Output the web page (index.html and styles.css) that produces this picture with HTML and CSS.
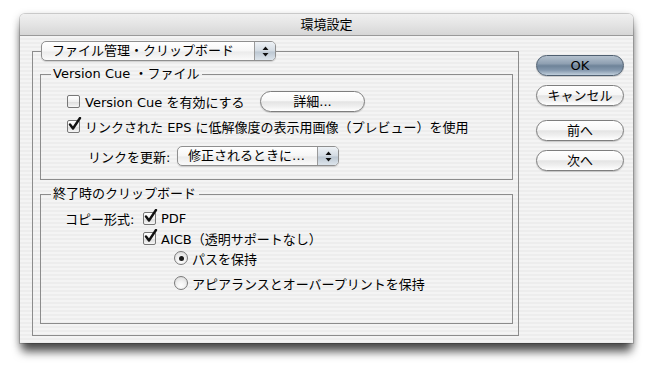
FILE: index.html
```html
<!DOCTYPE html>
<html lang="ja">
<head>
<meta charset="utf-8">
<title>環境設定</title>
<link rel="stylesheet" href="styles.css">
</head>
<body>
<div class="window">
  <div class="titlebar">環境設定</div>
  <div class="content">
    <fieldset class="panel">
      <legend class="panel-legend">
        <div class="popup popup-main">
          <span class="popup-label">ファイル管理・クリップボード</span>
          <span class="popup-arrows"><svg width="7" height="11" viewBox="0 0 7 11"><path d="M3.5 0.5 L6.5 4 L0.5 4 Z M3.5 10.5 L6.5 7 L0.5 7 Z" fill="#111"/></svg></span>
        </div>
      </legend>
      <fieldset class="group group-vc">
        <legend class="group-legend">Version Cue ・ファイル</legend>
        <div class="row row-enable">
          <span class="check"></span>
          <span class="enable-label">Version Cue を有効にする</span>
          <button class="btn btn-detail">詳細...</button>
        </div>
        <div class="row row-eps">
          <span class="check"><svg class="tick" width="16" height="16" viewBox="0 0 16 16"><path d="M3 7.5 L6 11.5 L13 1" fill="none" stroke="#111" stroke-width="2.4" stroke-linecap="round" stroke-linejoin="round"/></svg></span>
          <span>リンクされた EPS に低解像度の表示用画像（プレビュー）を使用</span>
        </div>
        <div class="row row-update">
          <span class="update-label">リンクを更新:</span>
          <div class="popup popup-update">
            <span class="popup-label">修正されるときに…</span>
            <span class="popup-arrows"><svg width="7" height="11" viewBox="0 0 7 11"><path d="M3.5 0.5 L6.5 4 L0.5 4 Z M3.5 10.5 L6.5 7 L0.5 7 Z" fill="#111"/></svg></span>
          </div>
        </div>
      </fieldset>
      <fieldset class="group group-clip">
        <legend class="group-legend">終了時のクリップボード</legend>
        <div class="crow crow-pdf">
          <span class="copy-label">コピー形式:</span>
          <span class="check"><svg class="tick" width="16" height="16" viewBox="0 0 16 16"><path d="M3 7.5 L6 11.5 L13 1" fill="none" stroke="#111" stroke-width="2.4" stroke-linecap="round" stroke-linejoin="round"/></svg></span>
          <span>PDF</span>
        </div>
        <div class="crow crow-aicb">
          <span class="check"><svg class="tick" width="16" height="16" viewBox="0 0 16 16"><path d="M3 7.5 L6 11.5 L13 1" fill="none" stroke="#111" stroke-width="2.4" stroke-linecap="round" stroke-linejoin="round"/></svg></span>
          <span>AICB（透明サポートなし）</span>
        </div>
        <div class="crow crow-radio1">
          <span class="radio selected"></span>
          <span>パスを保持</span>
        </div>
        <div class="crow crow-radio2">
          <span class="radio"></span>
          <span>アピアランスとオーバープリントを保持</span>
        </div>
      </fieldset>
    </fieldset>
    <div class="buttons">
      <button class="btn btn-side btn-default">OK</button>
      <button class="btn btn-side btn-cancel">キャンセル</button>
      <button class="btn btn-side btn-prev">前へ</button>
      <button class="btn btn-side btn-next">次へ</button>
    </div>
  </div>
</div>
</body>
</html>
```
FILE: styles.css
```css
html, body {
  margin: 0;
  padding: 0;
  background: #ffffff;
}
body {
  font-family: "DejaVu Sans", "Noto Sans CJK JP", sans-serif;
  font-size: 13px;
  color: #000;
  padding: 14px 0 0 20px;
  height: 367px;
  box-sizing: border-box;
}
.window {
  width: 613px;
  height: 329px;
  border-radius: 5px 5px 0 0;
  background: repeating-linear-gradient(to bottom, #ededed 0px, #ededed 2px, #f4f4f4 2px, #f4f4f4 4px);
  box-shadow: 0 11px 10px -2px rgba(0,0,0,0.6), 0 3px 9px rgba(0,0,0,0.35), 0 0 0 1px rgba(0,0,0,0.15);
}
.titlebar {
  height: 21px;
  line-height: 21px;
  text-align: center;
  font-size: 13px;
  background: linear-gradient(to bottom, #f0f0f0 0%, #e4e4e4 50%, #d6d6d6 100%);
  border-bottom: 1px solid #9a9a9a;
  border-radius: 5px 5px 0 0;
}
.content {
  display: flex;
  align-items: flex-start;
  padding: 5px 9px 0 12px;
}
fieldset {
  margin: 0;
  min-width: 0;
}
legend {
  padding: 0;
}
.panel {
  width: 487px;
  box-sizing: border-box;
  border: 1px solid #8c8c8c;
  padding: 1px 5px 11px 7px;
}
.panel-legend {
  margin-left: 1px;
  padding: 0;
  height: 20px;
}
.popup {
  display: flex;
  height: 20px;
  box-sizing: border-box;
  border: 1px solid #8f8f8f;
  border-radius: 5px;
  background: linear-gradient(to bottom, #ffffff 0%, #f6f6f6 50%, #ebebeb 55%, #fafafa 100%);
  box-shadow: 0 1px 1px rgba(0,0,0,0.15);
  overflow: hidden;
  line-height: 18px;
}
.popup-main {
  width: 235px;
}
.popup-update {
  width: 162px;
}
.popup-label {
  flex: 1;
  padding-left: 10px;
  white-space: nowrap;
  height: 18px;
}
.popup-arrows {
  width: 20px;
  display: flex;
  align-items: center;
  justify-content: center;
  border-left: 1px solid #9a9a9a;
  background: linear-gradient(to bottom, #eef2f6 0%, #d3dbe3 50%, #bcc7d2 55%, #dde5ec 100%);
}
.group {
  border: 1px solid #8c8c8c;
  padding: 0 10px 13px 10px;
}
.group-legend {
  padding: 0 3px 0 2px;
  line-height: 16px;
  height: 16px;
  white-space: nowrap;
}
.group-vc {
  margin-top: 4px;
}
.group-clip {
  margin-top: 6px;
  padding-bottom: 31px;
}
.row {
  display: flex;
  align-items: center;
  white-space: nowrap;
}
.row-enable {
  margin-top: 8px;
  height: 22px;
  padding-left: 16px;
}
.row-eps {
  margin-top: 4px;
  height: 20px;
  padding-left: 16px;
}
.row-update {
  margin-top: 10px;
  height: 20px;
  padding-left: 37px;
}
.enable-label {
  width: 175px;
}
.update-label {
  width: 89px;
}
.check {
  position: relative;
  flex: none;
  width: 13px;
  height: 13px;
  box-sizing: border-box;
  border: 1px solid #777;
  border-radius: 2px;
  background: linear-gradient(to bottom, #ffffff 0%, #f0f0f0 50%, #dcdcdc 55%, #f6f6f6 100%);
  margin-right: 5px;
}
.tick {
  position: absolute;
  left: -1px;
  top: -4px;
}
.radio {
  flex: none;
  width: 14px;
  height: 14px;
  box-sizing: border-box;
  border: 1px solid #7a7a7a;
  border-radius: 50%;
  background: radial-gradient(circle at 50% 70%, #ffffff 0%, #f2f2f2 40%, #d4d4d4 100%);
  margin-right: 4px;
  display: flex;
  align-items: center;
  justify-content: center;
}
.radio.selected::after {
  content: "";
  width: 5px;
  height: 5px;
  border-radius: 50%;
  background: #1a1a1a;
}
.crow {
  display: flex;
  align-items: center;
  height: 18px;
  white-space: nowrap;
}
.crow-pdf {
  margin-top: 7px;
  padding-left: 14px;
}
.copy-label {
  width: 78px;
}
.crow-aicb {
  margin-top: 2px;
  padding-left: 92px;
}
.crow-radio1 {
  margin-top: 2px;
  padding-left: 123px;
}
.crow-radio2 {
  margin-top: 7px;
  padding-left: 123px;
}
.btn {
  font-family: "DejaVu Sans", "Noto Sans CJK JP", sans-serif;
  font-size: 13px;
  color: #000;
  height: 21px;
  box-sizing: border-box;
  border: 1px solid #7e7e7e;
  border-radius: 11px;
  background: linear-gradient(to bottom, #ffffff 0%, #f7f7f7 45%, #e4e4e4 52%, #efefef 75%, #ffffff 100%);
  box-shadow: 0 1px 1px rgba(0,0,0,0.18);
  padding: 0;
  line-height: 19px;
}
.btn-detail {
  width: 105px;
}
.buttons {
  display: flex;
  flex-direction: column;
  margin-left: 17px;
  width: 88px;
}
.btn-side {
  width: 88px;
}
.btn-default {
  margin-top: 14px;
  border-color: #4f5f70;
  background: linear-gradient(to bottom, #b4c1ce 0%, #8fa0b2 40%, #6e8399 52%, #8498ad 75%, #c0cedb 100%);
}
.btn-cancel {
  margin-top: 9px;
}
.btn-prev {
  margin-top: 14px;
}
.btn-next {
  margin-top: 9px;
}
```
